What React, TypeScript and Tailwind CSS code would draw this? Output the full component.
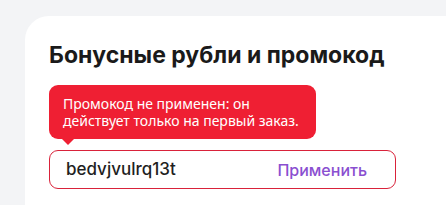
export default function App() {
  return (
    <div className="w-[446px] h-[205px] overflow-hidden bg-[#f3f4f6] pt-4 pl-[25px]">
      <div className="h-[220px] rounded-tl-[24px] bg-white pl-6 pr-[25px] pt-[25px]">
        <h2
          className="text-[23px] font-bold leading-7 text-[#1a1a1a]"
          style={{ fontFamily: 'Inter, "Noto Sans", sans-serif' }}
        >
          Бонусные рубли и промокод
        </h2>

        <div className="relative mt-[16px] w-[267px]">
          <div
            className="rounded-[9px] bg-[#ef1f33] px-[14px] pt-[10px] pb-[10px] text-[14px] leading-[17px] text-white"
            style={{ fontFamily: '"Noto Sans", sans-serif' }}
          >
            Промокод не применен: он
            <br />
            действует только на первый заказ.
          </div>
          <div className="absolute left-[13px] bottom-[-6px] h-0 w-0 border-x-[6px] border-t-[6px] border-x-transparent border-t-[#ef1f33]" />
        </div>

        <div
          className="mt-[11px] flex h-[39px] w-[347px] items-center justify-between rounded-[9px] border border-[#d9223a] pl-[16px] pr-[28px]"
          style={{ fontFamily: 'Inter, "Noto Sans", sans-serif' }}
        >
          <span className="text-[17px] font-medium text-[#1f1f1f]">bedvjvulrq13t</span>
          <button className="text-[16px] font-medium text-[#8a4fd0]">Применить</button>
        </div>
      </div>
    </div>
  )
}
